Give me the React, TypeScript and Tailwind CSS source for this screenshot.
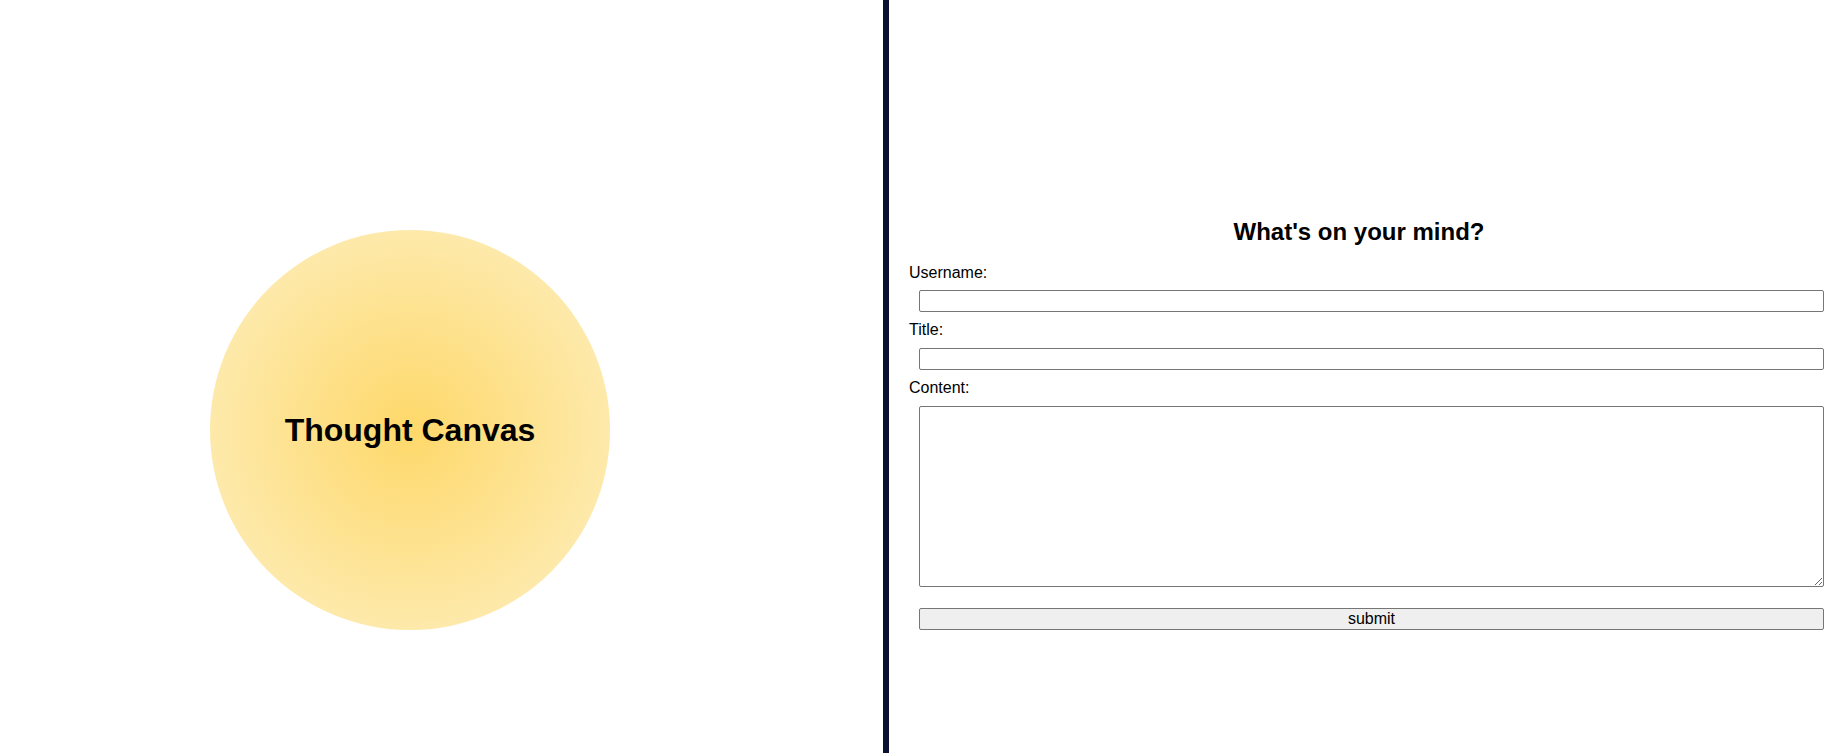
export default function App() {
  return (
    <div className="flex h-[753px] w-full bg-white font-['Liberation_Sans',Arial,sans-serif] text-black">
      {/* Left: logo bubble */}
      <div className="w-[883px] shrink-0 pl-[210px] pt-[230px]">
        <div className="flex h-[400px] w-[400px] items-center justify-center rounded-full bg-[radial-gradient(circle_closest-side,#fed86a_0%,#fde9aa_100%)]">
          <h1 className="text-[32px] font-bold leading-[normal]">Thought Canvas</h1>
        </div>
      </div>

      {/* Divider */}
      <div className="w-[6px] shrink-0 bg-[#0a1131]" />

      {/* Right: form */}
      <div className="flex-1 pt-[218px]">
        <h2 className="text-center text-[24px] font-bold leading-[normal]">What's on your mind?</h2>
        <form className="flex flex-col pl-[20px] text-[16px] leading-[normal]" onSubmit={(e) => e.preventDefault()}>
          <label className="mt-[18px] block">Username:</label>
          <input
            type="text"
            className="ml-[10px] mt-[8px] block h-[22px] w-[905px] rounded-[2px] border border-[#767676] px-[2px]"
          />
          <label className="mt-[9px] block">Title:</label>
          <input
            type="text"
            className="ml-[10px] mt-[9px] block h-[22px] w-[905px] rounded-[2px] border border-[#767676] px-[2px]"
          />
          <label className="mt-[9px] block">Content:</label>
          <textarea className="ml-[10px] mt-[9px] block h-[181px] w-[905px] rounded-[2px] border border-[#767676] p-[2px]" />
          <button
            type="submit"
            className="ml-[10px] mt-[21px] block h-[22px] w-[905px] rounded-[2px] border border-[#767676] bg-[#efefef] text-[16px] leading-[normal]"
          >
            submit
          </button>
        </form>
      </div>
    </div>
  );
}
